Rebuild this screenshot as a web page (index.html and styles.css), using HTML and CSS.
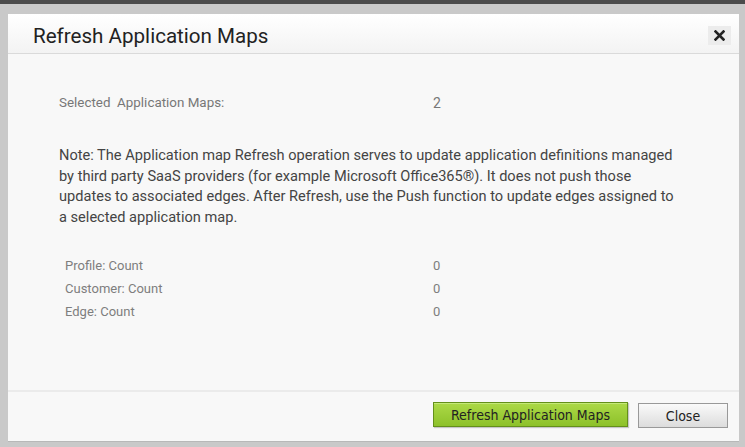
FILE: index.html
```html
<!DOCTYPE html>
<html>
<head>
<meta charset="utf-8">
<link rel="stylesheet" href="styles.css">
</head>
<body>
<div class="topbar"></div>
<div class="dialog">
  <div class="header">
    <h1 class="title">Refresh Application Maps</h1>
    <button class="x-btn" aria-label="Close">
      <svg width="11" height="11" viewBox="0 0 11 11"><path d="M1.5 1.5 L9.5 9.5 M9.5 1.5 L1.5 9.5" stroke="#222" stroke-width="2.6" stroke-linecap="square"/></svg>
    </button>
  </div>
  <div class="body">
    <div class="row selected">
      <span class="label">Selected&nbsp; Application Maps:</span>
      <span class="value">2</span>
    </div>
    <p class="note">Note: The Application map Refresh operation serves to update application definitions managed by third party SaaS providers (for example Microsoft Office365®). It does not push those updates to associated edges. After Refresh, use the Push function to update edges assigned to a selected application map.</p>
    <div class="counts">
      <div class="row count"><span class="label">Profile: Count</span><span class="value">0</span></div>
      <div class="row count"><span class="label">Customer: Count</span><span class="value">0</span></div>
      <div class="row count"><span class="label">Edge: Count</span><span class="value">0</span></div>
    </div>
  </div>
  <div class="footer">
    <button class="btn primary">Refresh Application Maps</button>
    <button class="btn secondary">Close</button>
  </div>
</div>
</body>
</html>
```

FILE: styles.css
```css
html, body {
  margin: 0;
  padding: 0;
}
body {
  background: #c9c9c9;
  width: 745px;
  height: 447px;
  overflow: hidden;
  font-family: Roboto, "Liberation Sans", sans-serif;
}
.topbar {
  height: 4px;
  background: #4b4b4b;
}
.dialog {
  margin: 10px 0 0 8px;
  width: 731px;
  height: 428px;
  background: #f8f8f8;
  border-bottom: 1px solid #b8b8b8;
  box-sizing: border-box;
  display: flex;
  flex-direction: column;
}
.header {
  height: 40px;
  box-sizing: border-box;
  background: linear-gradient(#ffffff, #f3f3f3);
  border-bottom: 1px solid #dadada;
  display: flex;
  align-items: center;
  justify-content: space-between;
  padding: 4px 8px 0 25px;
}
.title {
  margin: 0;
  font-size: 20.6px;
  font-weight: 400;
  color: #222;
}
.x-btn {
  width: 23px;
  height: 19px;
  border: none;
  padding: 0;
  background: #ececec;
  display: flex;
  align-items: center;
  justify-content: center;
}
.body {
  flex: 1;
  padding: 41px 0 0 51px;
  color: #555;
}
.row {
  display: grid;
  grid-template-columns: 374px auto;
}
.selected {
  color: #777;
  font-size: 13.4px;
  line-height: 16px;
}
.selected .value {
  font-size: 14px;
}
.note {
  margin: 34px 0 0 0;
  width: 626px;
  font-size: 14.6px;
  line-height: 20.5px;
  color: #444;
}
.counts {
  margin-top: 31px;
  padding-left: 6px;
  display: flex;
  flex-direction: column;
  gap: 7px;
}
.count {
  grid-template-columns: 368px auto;
  font-size: 13px;
  line-height: 16px;
  color: #7e7e7e;
}
.footer {
  height: 51px;
  box-sizing: border-box;
  border-top: 2px solid #ebebeb;
  display: flex;
  justify-content: flex-end;
  align-items: flex-start;
  gap: 10px;
  padding: 10px 11px 0 0;
}
.btn {
  font-family: "DejaVu Sans Condensed", "Liberation Sans", sans-serif;
  font-size: 14px;
  height: 25px;
  padding: 0;
  color: #222;
}
.primary {
  width: 195px;
  background: linear-gradient(#acd947, #8dc12a);
  border: 1px solid #64901a;
  box-shadow: inset 0 1px 0 #c4e879, 1px 1px 1px rgba(0,0,0,0.2);
}
.secondary {
  width: 90px;
  margin-top: 1px;
  background: linear-gradient(#fafafa, #dcdcdc);
  border: 1px solid #999;
}
```
